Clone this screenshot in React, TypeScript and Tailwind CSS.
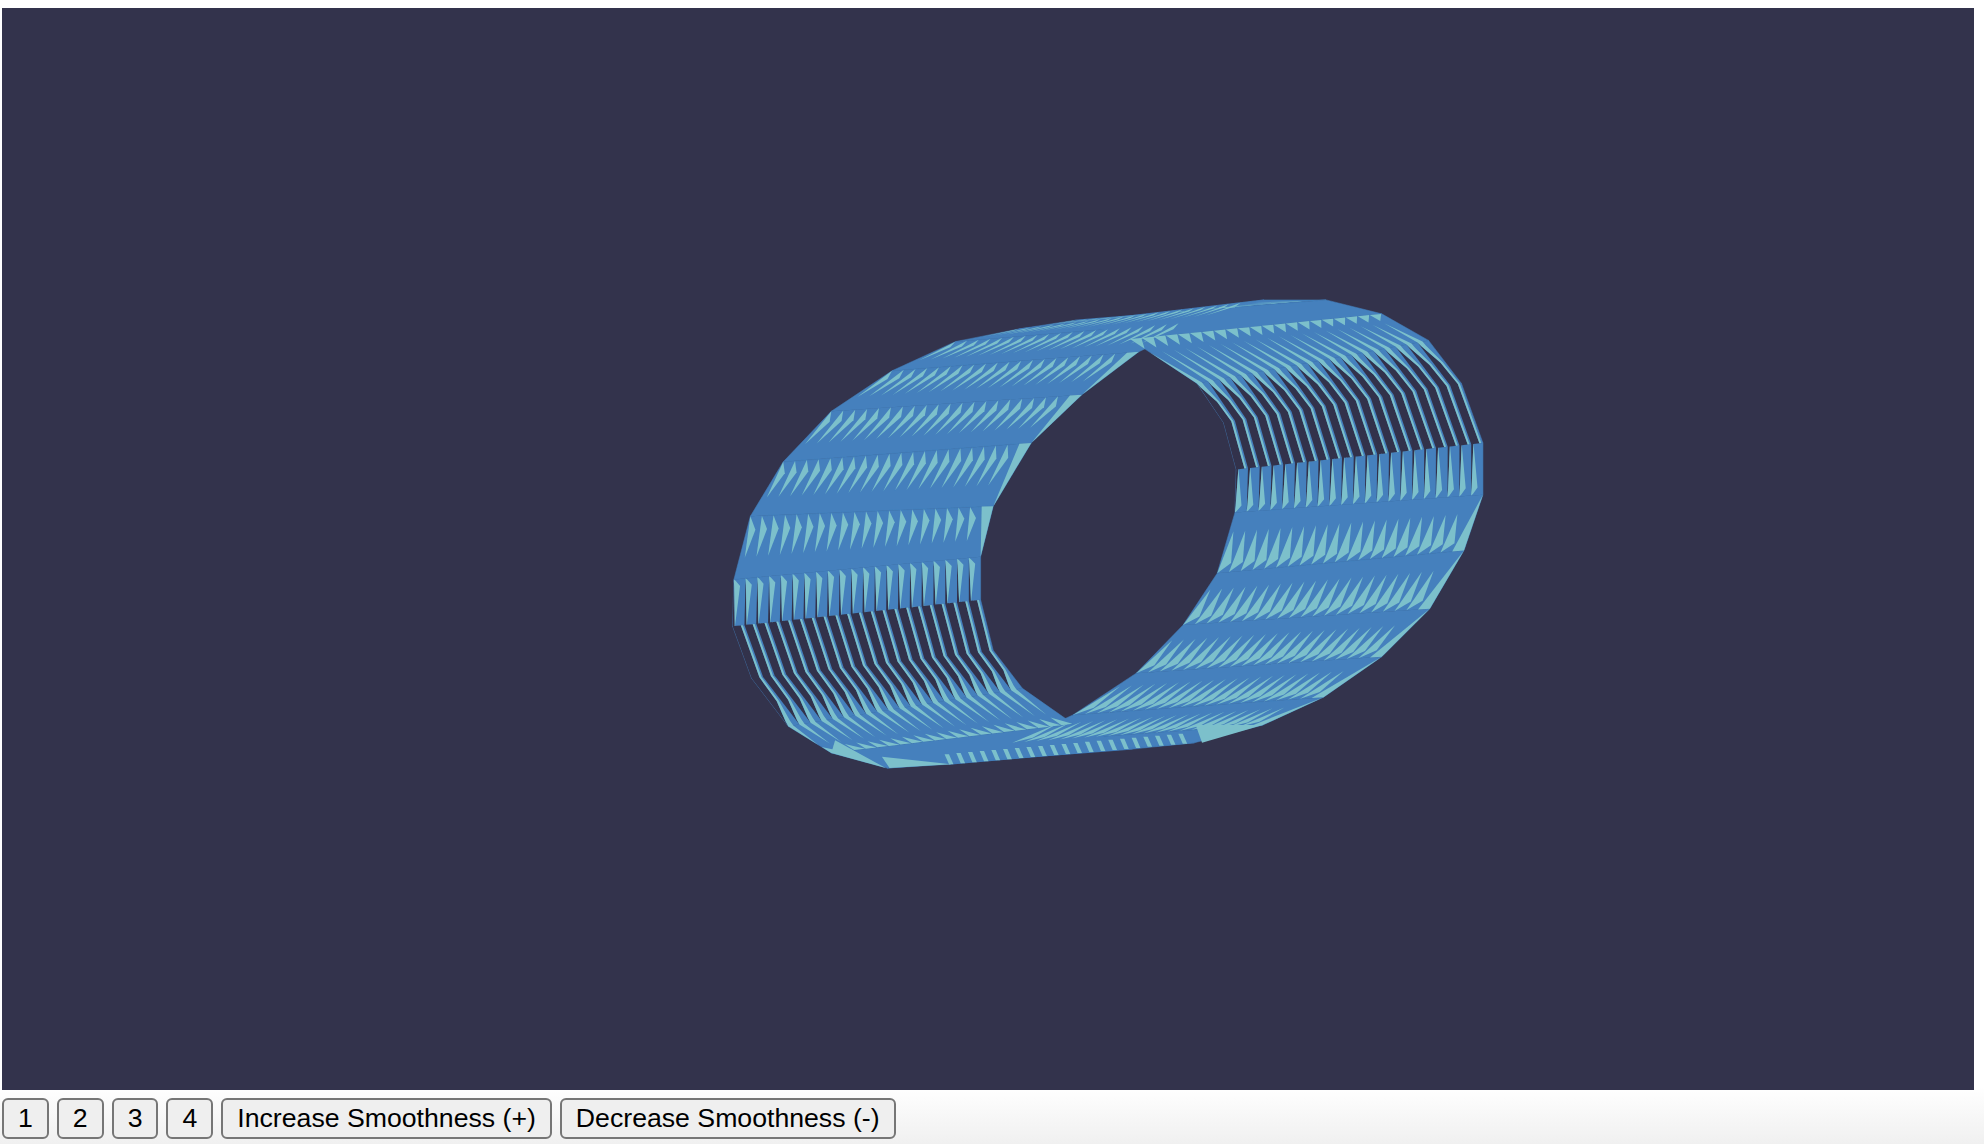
import React from "react"

const BLUE = "#4480bd"
const LIGHT = "#7cc0cb"
const DARK = "#33334c"

// the two end rings of the tube, 24 sides, read off the picture
const nearRing: number[][] = [
  [579, 495], [580, 458], [593, 408], [619, 365], [657, 325], [705, 293],
  [755, 270], [805, 260], [850, 253], [893, 268], [946, 303], [967, 334],
  [977, 371], [976, 405], [962, 453], [935, 494], [898, 532], [848, 565],
  [800, 587], [750, 604], [701, 607], [657, 595], [623, 574], [594, 536],
]
const farRing: number[][] = [
  [775, 474], [775, 440], [785, 400], [815, 350], [855, 312], [900, 278],
  [950, 254], [999, 237], [1048, 237], [1092, 248], [1129, 269], [1155, 303],
  [1172, 350], [1172, 391], [1157, 435], [1130, 481], [1092, 519], [1046, 551],
  [998, 573], [944, 587], [895, 592], [848, 572], [808, 544], [785, 514],
]
const COLS = 21
const DT = 1 / COLS

// point on the wall: u runs round the ring, t along the tube
function pt(u: number, t: number) {
  const n = nearRing.length
  const i = Math.floor(u)
  const s = u - i
  const i0 = ((i % n) + n) % n
  const i1 = (i0 + 1) % n
  const ax = nearRing[i0][0] + (farRing[i0][0] - nearRing[i0][0]) * t
  const ay = nearRing[i0][1] + (farRing[i0][1] - nearRing[i0][1]) * t
  const bx = nearRing[i1][0] + (farRing[i1][0] - nearRing[i1][0]) * t
  const by = nearRing[i1][1] + (farRing[i1][1] - nearRing[i1][1]) * t
  return [ax + (bx - ax) * s, ay + (by - ay) * s]
}

function toPoints(list: number[][]) {
  return list.map((p) => `${p[0].toFixed(2)},${p[1].toFixed(2)}`).join(" ")
}

// inside of the tube: [u from start of arc, gap width, light width]
const backStops: number[][] = [
  [0, 0, 0.95],
  [0.22, 0, 0],
  [0.3, 0, 0],
  [1, 0, 0.45],
  [1.1, 0.08, 0.4],
  [1.5, 0.6, 0.2],
  [2, 0.68, 0.18],
  [3, 0.7, 0.16],
  [3, 0.18, 0.02],
  [3.85, 0.04, 0.5],
  [3.97, 0, 0.15],
  [4, 0, 0],
]

function buildShapes() {
  const light: string[] = []
  const dark: string[] = []
  const blue: string[] = []

  for (let i = 0; i < 24; i++) {
    blue.push(toPoints([pt(i, 0), pt(i + 1, 0), pt(i + 1, 1), pt(i, 1)]))
  }

  // outside faces: long saw teeth, the upper half leans differently from the lower half
  for (const f of [1, 2, 3, 4, 5, 6, 7]) {
    for (let j = 0; j < COLS - 1; j++) {
      const t = j * DT
      light.push(toPoints([pt(f + 1, t), pt(f + 0.78, t + DT * 0.75), pt(f + 0.34, t + DT * 0.45)]))
    }
  }
  for (const f of [13, 14, 15, 16, 17]) {
    for (let j = 0; j < COLS - 1; j++) {
      const t = j * DT
      light.push(toPoints([pt(f + 1, t), pt(f + 0.85, t + DT * 0.95), pt(f + 0.32, t + DT * 0.35)]))
    }
  }
  for (const f of [1, 2, 3, 4, 13, 14, 15, 16, 17]) {
    light.push(toPoints([pt(f, 1), pt(f + 1, 1), pt(f + 1, 1 - DT)]))
  }

  // inside faces: strips with dark slits
  for (const start of [9, 21]) {
    for (let j = 0; j < COLS; j++) {
      const t = j * DT
      const gapA = backStops.map((s) => pt(start + s[0], t))
      const gapB = backStops.map((s) => pt(start + s[0], t + s[1] * DT))
      const lightB = backStops.map((s) => pt(start + s[0], t + (s[1] + s[2]) * DT))
      dark.push(toPoints([...gapA, ...gapB.reverse()]))
      light.push(toPoints([...backStops.map((s) => pt(start + s[0], t + s[1] * DT)), ...lightB.reverse()]))
    }
  }

  // flat bottom face: short hatching and the wedges on the rim
  for (let j = 0; j < COLS; j++) {
    const p = pt(19, j * DT)
    light.push(toPoints([[p[0] - 3.5, p[1] - 8], [p[0], p[1] - 8], [p[0] + 3.5, p[1]], [p[0], p[1]]]))
  }
  light.push(toPoints([[945, 573], [998, 573], [950, 587]]))
  light.push(toPoints([[697, 598], [752, 604], [703, 607]]))
  light.push(toPoints([[660, 585], [700, 607], [657, 595]]))

  return { blue, light, dark }
}

const shapes = buildShapes()

function Tube() {
  return (
    <svg viewBox="1.58 6.32 1558.5 855.1" className="block w-full h-full">
      <filter id="soft">
        <feGaussianBlur stdDeviation="0.45" />
      </filter>
      <g filter="url(#soft)">
        {shapes.blue.map((p, i) => (
          <polygon key={i} points={p} fill={BLUE} stroke={BLUE} strokeWidth={0.4} />
        ))}
        {shapes.dark.map((p, i) => (
          <polygon key={i} points={p} fill={DARK} />
        ))}
        {shapes.light.map((p, i) => (
          <polygon key={i} points={p} fill={LIGHT} />
        ))}
      </g>
    </svg>
  )
}

function Btn({ label }: { label: string }) {
  return (
    <button className="h-[41px] px-[14px] border-2 border-[#767676] rounded-[6px] bg-[#efefef] text-black text-[26.67px] leading-none font-['Liberation_Sans',Arial,sans-serif]">
      {label}
    </button>
  )
}

export default function App() {
  return (
    <div className="w-[1984px] h-[1144px] overflow-hidden flex flex-col pt-2 bg-linear-to-b from-white from-[95%] to-[#f0f0f0]">
      <div className="ml-0.5 w-[1972px] h-[1082px] bg-[#33334c]">
        <Tube />
      </div>
      <div className="flex gap-2 ml-0.5 mt-2">
        <Btn label="1" />
        <Btn label="2" />
        <Btn label="3" />
        <Btn label="4" />
        <Btn label="Increase Smoothness (+)" />
        <Btn label="Decrease Smoothness (-)" />
      </div>
    </div>
  )
}
